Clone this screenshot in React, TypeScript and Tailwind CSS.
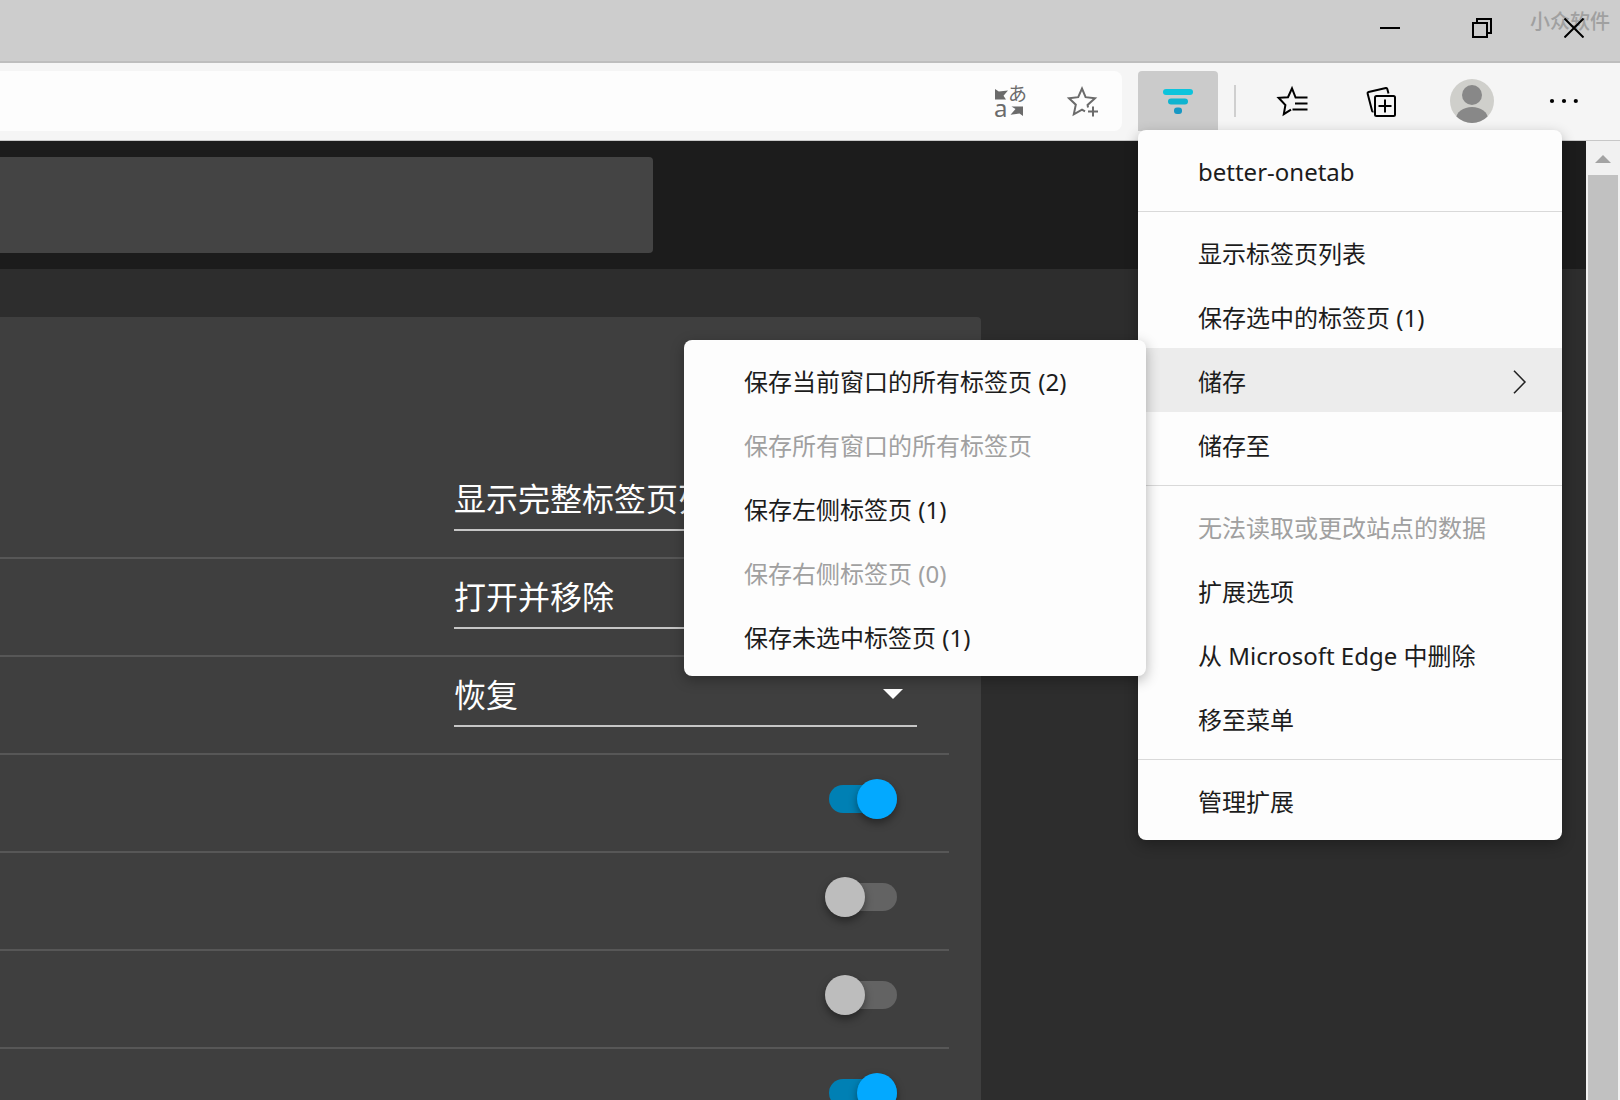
import React, { useState } from "react";
import clsx from "clsx";

type MenuEntry = {
  label: string;
  disabled?: boolean;
  children?: MenuEntry[];
};

const saveItems: MenuEntry[] = [
  { label: "保存当前窗口的所有标签页 (2)" },
  { label: "保存所有窗口的所有标签页", disabled: true },
  { label: "保存左侧标签页 (1)" },
  { label: "保存右侧标签页 (0)", disabled: true },
  { label: "保存未选中标签页 (1)" },
];

// Each group is followed by a separator, except the last one
const menuGroups: MenuEntry[][] = [
  [{ label: "better-onetab" }],
  [
    { label: "显示标签页列表" },
    { label: "保存选中的标签页 (1)" },
    { label: "储存", children: saveItems },
    { label: "储存至" },
  ],
  [
    { label: "无法读取或更改站点的数据", disabled: true },
    { label: "扩展选项" },
    { label: "从 Microsoft Edge 中删除" },
    { label: "移至菜单" },
  ],
  [{ label: "管理扩展" }],
];

const selects = [
  { name: "clickAction", value: "显示完整标签页列表" },
  { name: "itemAction", value: "打开并移除" },
  { name: "titleAction", value: "恢复" },
];

const switches = [true, false, false, true];

const MenuItem: React.FC<{ item: MenuEntry }> = ({ item }) => (
  <li className="relative">
    <button
      type="button"
      disabled={item.disabled}
      className={clsx(
        "flex h-16 w-full items-center justify-between pt-1 pr-9 pl-15 text-left text-2xl whitespace-nowrap",
        item.disabled ? "text-[#a0a0a0]" : "text-[#1c1c1c]",
        item.children && "bg-[#ececec]"
      )}
    >
      {item.label}
      {item.children && (
        <svg width="13" height="24" viewBox="0 0 13 24" fill="none" stroke="#222" strokeWidth="1.6">
          <path d="M1 0.8 L12 12 L1 23.2" />
        </svg>
      )}
    </button>
    {item.children && (
      <ul className="absolute -top-2 right-full z-30 -mr-2 w-[462px] rounded-lg bg-[#fdfdfd] py-2 shadow-[0_4px_14px_rgba(0,0,0,0.3)]">
        {item.children.map((child) => (
          <MenuItem key={child.label} item={child} />
        ))}
      </ul>
    )}
  </li>
);

const ExtensionMenu: React.FC = () => (
  <div className="absolute top-[59px] left-0 z-20 w-[424px] rounded-lg bg-[#fdfdfd] py-2 shadow-[0_5px_14px_rgba(0,0,0,0.3)]">
    {menuGroups.map((group, i) => (
      <React.Fragment key={i}>
        {i > 0 && <hr className="mt-[9px] mb-2 border-[#d9d9d9]" />}
        <ul>
          {group.map((item) => (
            <MenuItem key={item.label} item={item} />
          ))}
        </ul>
      </React.Fragment>
    ))}
  </div>
);

const TitleBar: React.FC = () => (
  <div className="relative flex h-[63px] shrink-0 items-start justify-end border-b-2 border-[#bdbdbd] bg-[#cdcdcd]">
    <button type="button" aria-label="最小化" className="flex h-14 w-[92px] items-center justify-center">
      <svg width="20" height="20" viewBox="0 0 20 20" stroke="#000" strokeWidth="2">
        <path d="M0 10 H20" />
      </svg>
    </button>
    <button type="button" aria-label="还原" className="flex h-14 w-[92px] items-center justify-center">
      <svg width="20" height="20" viewBox="0 0 20 20" fill="none" stroke="#000" strokeWidth="2">
        <path d="M1 5 H15 V19 H1 Z M5 5 V1 H19 V15 H15" />
      </svg>
    </button>
    <span className="absolute top-2.5 right-[10px] text-xl leading-6 font-medium text-[#a0a0a0]">小众软件</span>
    <button type="button" aria-label="关闭" className="relative flex h-14 w-[92px] items-center justify-center">
      <svg width="20" height="20" viewBox="0 0 20 20" stroke="#000" strokeWidth="2">
        <path d="M0.5 0.5 L19.5 19.5 M19.5 0.5 L0.5 19.5" />
      </svg>
    </button>
  </div>
);

const AddressBar: React.FC = () => (
  <div className="mr-4 flex h-15 flex-1 items-center rounded-r-lg bg-[#fdfdfd] pr-1">
    <input aria-label="地址" className="h-full min-w-0 flex-1 bg-transparent px-4 text-2xl outline-none" />
    <button type="button" aria-label="翻译" className="flex h-full w-[72px] items-center justify-center">
      <svg className="overflow-visible" width="36" height="42" viewBox="-2 -4 36 42" fill="#6b6b6b">
        <text x="14" y="17" fontSize="19" fontFamily="'Noto Sans CJK JP', sans-serif">
          あ
        </text>
        <text x="0" y="33" fontSize="24" fontFamily="'Noto Sans', sans-serif">
          a
        </text>
        <path d="M1 5 L4.8 7.6 L14 6.4 L9.5 11.8 L12 15.5 H1 Z" />
        <path d="M29 32 V22.5 H17.5 L21.5 25 L16.5 30.8 L25.5 29.4 Z" />
      </svg>
    </button>
    <button type="button" aria-label="添加到收藏夹" className="flex h-full w-[72px] items-center justify-center">
      <svg width="32" height="34" viewBox="0 0 32 34" fill="none" stroke="#6b6b6b" strokeWidth="2">
        <path d="M22 23.5 L21.6 21 L29 14.3 L19.6 13.2 L16 4.5 L12.2 13.2 L3 14.3 L9.8 20.7 L7.8 30.3 L16 25.6 L19 27.4" />
        <path d="M27 22.5 V32.5 M22 27.5 H32" />
      </svg>
    </button>
  </div>
);

const Toolbar: React.FC = () => (
  <div className="flex h-[78px] shrink-0 items-start border-b border-[#c8c8c8] bg-[#f5f5f5] pt-2 pr-[18px]">
    <AddressBar />
    <div className="relative">
      <button
        type="button"
        aria-label="better-onetab"
        aria-haspopup="menu"
        className="flex h-15 w-20 items-center justify-center rounded-t bg-[#cbcbcb]"
      >
        <svg width="32" height="26" viewBox="0 0 32 26">
          <rect x="1" y="1" width="30" height="6" rx="3" fill="#0dc4dc" />
          <rect x="6" y="10.5" width="20" height="6" rx="3" fill="#0fb4d0" />
          <rect x="12" y="19.5" width="8" height="6.5" rx="3" fill="#1798c4" />
        </svg>
      </button>
      <ExtensionMenu />
    </div>
    <div className="mx-4 mt-3.5 h-8 w-0.5 bg-[#cfcfcf]" />
    <div className="flex h-15 items-center gap-2.5">
      <button type="button" aria-label="收藏夹" className="flex h-full w-20 items-center justify-center">
        <svg width="34" height="34" viewBox="0 0 34 34" fill="none" stroke="#000" strokeWidth="2">
          <path d="M32.5 13.6 H20.6 L17 4.3 L13 13.2 L3.6 13.8 L10.4 21 L8.8 30.2 L16 25.6" />
          <path d="M20 19.6 H32.5 M17.5 25.6 H32.5" />
        </svg>
      </button>
      <button type="button" aria-label="集锦" className="flex h-full w-20 items-center justify-center">
        <svg width="32" height="34" viewBox="0 0 32 34" fill="none" stroke="#000" strokeWidth="2">
          <rect x="9" y="12" width="20" height="20" rx="1.5" />
          <path d="M19 15.5 V28.5 M12.5 22 H25.5" />
          <path d="M22.5 9.5 L21.3 5 Q21 3.9 19.9 4.1 L2.6 8 Q1.3 8.4 1.6 9.6 L6 26.6 Q6.3 27.6 7.5 27.4" />
        </svg>
      </button>
      <button type="button" aria-label="个人资料" className="flex h-full w-20 items-center justify-center">
        <svg width="44" height="44" viewBox="0 0 44 44">
          <clipPath id="avatar">
            <circle cx="22" cy="22" r="22" />
          </clipPath>
          <g clipPath="url(#avatar)">
            <rect width="44" height="44" fill="#cfcfcb" />
            <circle cx="22" cy="16" r="10" fill="#888" />
            <ellipse cx="22" cy="40" rx="16" ry="12" fill="#888" />
          </g>
        </svg>
      </button>
      <button type="button" aria-label="设置及其他" className="flex h-full w-20 items-center justify-center">
        <svg width="32" height="6" viewBox="0 0 32 6">
          <circle cx="6" cy="3" r="2.1" />
          <circle cx="18" cy="3" r="2.1" />
          <circle cx="29.8" cy="3" r="2.1" />
        </svg>
      </button>
    </div>
  </div>
);

const SettingRow: React.FC<{ children: React.ReactNode }> = ({ children }) => (
  <div className="flex h-[98px] items-start justify-end border-b-2 border-[#575757]">{children}</div>
);

const SelectField: React.FC<{ name: string; value: string }> = ({ name, value }) => (
  <div className="relative mt-2 mr-8 w-[463px]">
    <select
      aria-label={name}
      name={name}
      defaultValue={value}
      className="h-[62px] w-full appearance-none border-b-2 border-[#c6c6c6] bg-transparent text-[32px] text-white outline-none"
    >
      <option value={value}>{value}</option>
    </select>
    <svg className="pointer-events-none absolute top-6 right-3.5" width="20" height="10" viewBox="0 0 20 10" fill="#fff">
      <path d="M0 0 H20 L10 10 Z" />
    </svg>
  </div>
);

const Switch: React.FC<{ name: string; initial: boolean }> = ({ name, initial }) => {
  const [on, setOn] = useState(initial);
  return (
    <label className="relative mt-6 mr-[52px] flex h-10 w-[72px] cursor-pointer items-center justify-end">
      <input
        type="checkbox"
        role="switch"
        aria-label={name}
        checked={on}
        onChange={() => setOn(!on)}
        className="sr-only"
      />
      <span className={clsx("h-7 w-[68px] rounded-full", on ? "bg-[#0080b4]" : "bg-[#636363]")} />
      <span
        className={clsx(
          "absolute top-0 size-10 rounded-full shadow-[0_4px_8px_rgba(0,0,0,0.4)]",
          on ? "right-0 bg-[#03a9ff]" : "left-0 bg-[#bdbdbd]"
        )}
      />
    </label>
  );
};

const OptionsPage: React.FC = () => (
  <div className="flex min-w-0 flex-1 flex-col bg-[#2d2d2d]">
    <header className="h-32 shrink-0 bg-[#1c1c1c] pt-4">
      <input aria-label="搜索" className="block h-24 w-[653px] rounded-r bg-[#444] px-6 text-[32px] text-white outline-none" />
    </header>
    <main className="mt-12 mr-[605px] flex-1 rounded-tr bg-[#3f3f3f] pt-36 pr-8">
      {selects.map((field) => (
        <SettingRow key={field.name}>
          <SelectField name={field.name} value={field.value} />
        </SettingRow>
      ))}
      {switches.map((initial, i) => (
        <SettingRow key={i}>
          <Switch name={`option-${i}`} initial={initial} />
        </SettingRow>
      ))}
    </main>
  </div>
);

const ScrollBar: React.FC = () => (
  <div className="flex w-[34px] shrink-0 flex-col items-center bg-[#f1f1f1]">
    <svg className="mt-3.5 mb-3 shrink-0" width="16" height="8" viewBox="0 0 16 8" fill="#a3a3a3">
      <path d="M0 8 L8 0 L16 8 Z" />
    </svg>
    <div className="w-[30px] flex-1 bg-[#c1c1c1]" />
  </div>
);

const App: React.FC = () => {
  return (
    <div className="flex h-screen flex-col overflow-hidden font-['Noto_Sans','Noto_Sans_CJK_SC',sans-serif]">
      <TitleBar />
      <Toolbar />
      <div className="flex min-h-0 flex-1 overflow-hidden">
        <OptionsPage />
        <ScrollBar />
      </div>
    </div>
  );
};

export default App;
